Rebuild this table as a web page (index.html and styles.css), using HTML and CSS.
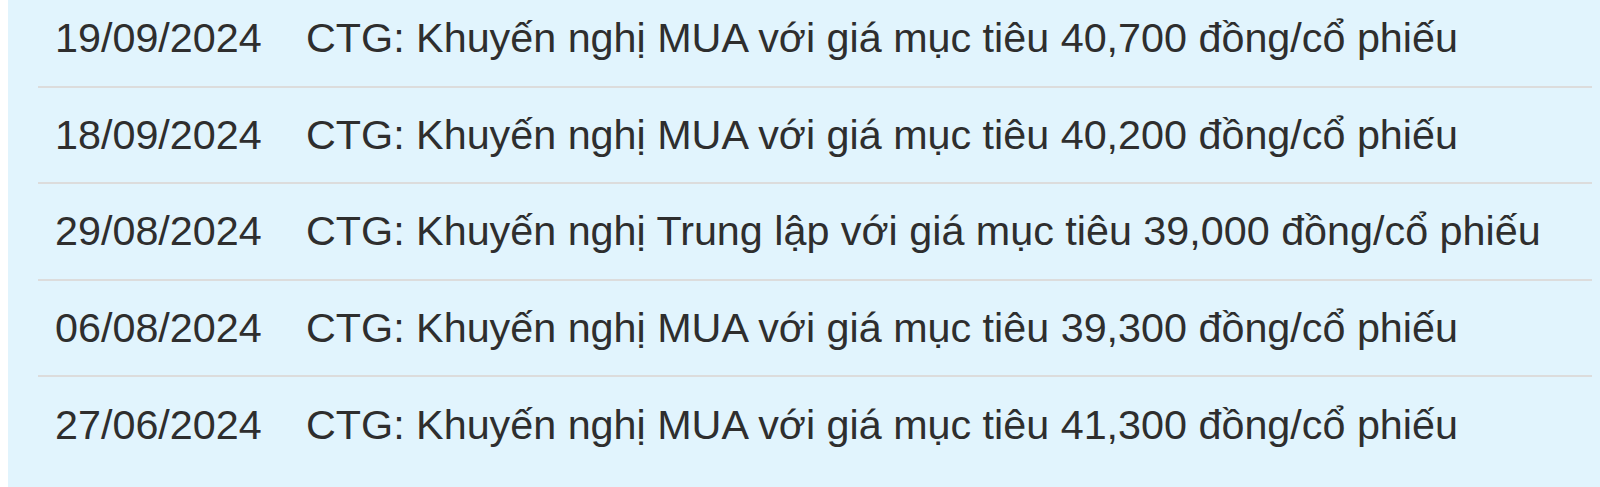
FILE: index.html
```html
<!DOCTYPE html>
<html lang="vi">
<head>
    <meta charset="UTF-8">
    <meta name="viewport" content="width=device-width, initial-scale=1.0">
    <title>Báo cáo phân tích CTG</title>
    <link rel="stylesheet" href="styles.css">
</head>
<body>
    <div class="report-box">
        <ul class="report-list">
            <li class="report-item">
                <span class="report-date">19/09/2024</span>
                <span class="report-title">CTG: Khuyến nghị MUA với giá mục tiêu 40,700 đồng/cổ phiếu</span>
            </li>
            <li class="report-item">
                <span class="report-date">18/09/2024</span>
                <span class="report-title">CTG: Khuyến nghị MUA với giá mục tiêu 40,200 đồng/cổ phiếu</span>
            </li>
            <li class="report-item">
                <span class="report-date">29/08/2024</span>
                <span class="report-title">CTG: Khuyến nghị Trung lập với giá mục tiêu 39,000 đồng/cổ phiếu</span>
            </li>
            <li class="report-item">
                <span class="report-date">06/08/2024</span>
                <span class="report-title">CTG: Khuyến nghị MUA với giá mục tiêu 39,300 đồng/cổ phiếu</span>
            </li>
            <li class="report-item">
                <span class="report-date">27/06/2024</span>
                <span class="report-title">CTG: Khuyến nghị MUA với giá mục tiêu 41,300 đồng/cổ phiếu</span>
            </li>
        </ul>
    </div>
</body>
</html>
```

FILE: styles.css
```css
body {
    font-family: "Liberation Sans", Arial, sans-serif;
    margin: 0;
    padding: 0;
    background-color: #fff;
    overflow: hidden;
}
.report-box {
    margin: -9px 0 0 8px;
    padding: 0 8px 15px 30px;
    background-color: #e1f4fd;
}
.report-list {
    list-style: none;
    margin: 0;
    padding: 0;
}
.report-item {
    display: grid;
    grid-template-columns: 251px 1fr;
    padding: 24.3px 16px 24.3px 17px;
    font-size: 41.3px;
    line-height: 46px;
    color: #2e2e2e;
    border-bottom: 2px solid #dcdcdc;
    white-space: nowrap;
}
.report-item:last-child {
    border-bottom: none;
}
```
